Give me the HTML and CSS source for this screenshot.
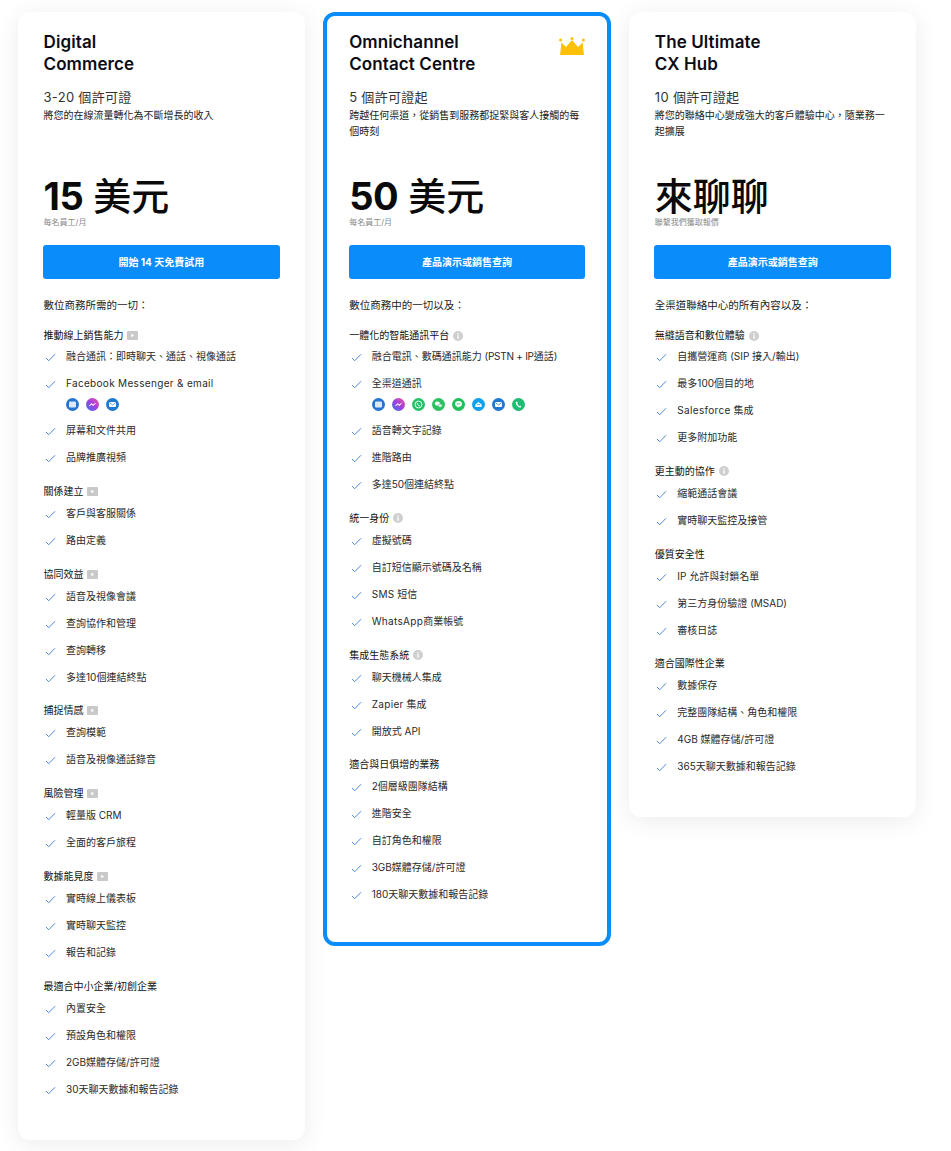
FILE: index.html
```html
<!DOCTYPE html>
<html lang="zh-Hant">
<head>
<meta charset="utf-8">
<title>Plans</title>
<link rel="stylesheet" href="styles.css">
</head>
<body>
<svg class="defs" width="0" height="0" aria-hidden="true">
  <defs>
    <symbol id="chk" viewBox="0 0 12 10"><path d="M1 5.600 4 8.600 11 1.400" fill="none" stroke="#4a86d6" stroke-width="1.1"/></symbol>
    <symbol id="play" viewBox="0 0 11 9"><rect width="11" height="9" rx="1" fill="#c9c9c9"/><path d="M4.200 2.800v3.400l3-1.700z" fill="#fff"/></symbol>
    <symbol id="info" viewBox="0 0 10 10"><circle cx="5" cy="5" r="5" fill="#cfcfcf"/><rect x="4.400" y="4.200" width="1.300" height="3.600" fill="#fff"/><rect x="4.400" y="2.200" width="1.300" height="1.300" fill="#fff"/></symbol>
    <linearGradient id="msg" x1="0" y1="1" x2="1" y2="0"><stop offset="0" stop-color="#2f7bf0"/><stop offset=".5" stop-color="#a23fe0"/><stop offset="1" stop-color="#f0569a"/></linearGradient>
    <symbol id="i-chat" viewBox="0 0 13 13"><circle cx="6.500" cy="6.500" r="6.500" fill="#2574d2"/><rect x="3" y="3.600" width="7" height="5.800" rx="1.200" fill="#dbe9fa"/></symbol>
    <symbol id="i-msg" viewBox="0 0 13 13"><circle cx="6.500" cy="6.500" r="6.500" fill="url(#msg)"/><path d="M3.400 7.800 5.600 5.400l1.500 1.300 2.500-1.500-2.200 2.500-1.500-1.300z" fill="#fff" stroke="#fff" stroke-width=".5"/></symbol>
    <symbol id="i-wa" viewBox="0 0 13 13"><circle cx="6.500" cy="6.500" r="6.500" fill="#27c068"/><circle cx="6.500" cy="6.500" r="3.400" fill="none" stroke="#fff" stroke-width=".9"/><path d="M5.300 5.100c0 1.500 1 2.600 2.500 2.800" fill="none" stroke="#fff" stroke-width=".9"/></symbol>
    <symbol id="i-we" viewBox="0 0 13 13"><circle cx="6.500" cy="6.500" r="6.500" fill="#2cc162"/><ellipse cx="5.400" cy="5.600" rx="2.600" ry="2.100" fill="#fff"/><ellipse cx="8.200" cy="7.600" rx="2.100" ry="1.700" fill="#dff5e6" stroke="#2cc162" stroke-width=".4"/></symbol>
    <symbol id="i-line" viewBox="0 0 13 13"><circle cx="6.500" cy="6.500" r="6.500" fill="#1fc05b"/><ellipse cx="6.500" cy="5.900" rx="3.400" ry="2.800" fill="#fff"/><path d="M5.600 8.200h1.800L5.800 10z" fill="#fff"/><rect x="4.800" y="5.500" width="3.400" height=".8" fill="#1fc05b"/></symbol>
    <symbol id="i-sms" viewBox="0 0 13 13"><circle cx="6.500" cy="6.500" r="6.500" fill="#0ea2ee"/><path d="M3.400 6.400 6.500 4l3.100 2.400v2.600H3.400z" fill="#fff"/><rect x="5" y="6.200" width="3" height=".7" fill="#0ea2ee"/></symbol>
    <symbol id="i-mail" viewBox="0 0 13 13"><circle cx="6.500" cy="6.500" r="6.500" fill="#1f78d1"/><rect x="3" y="3.900" width="7" height="5.200" rx="1" fill="#fff"/><path d="M3.400 4.600 6.500 7l3.100-2.400" fill="none" stroke="#1f78d1" stroke-width=".7"/></symbol>
    <symbol id="i-tel" viewBox="0 0 13 13"><circle cx="6.500" cy="6.500" r="6.500" fill="#1dbd72"/><path d="M4.400 3.400c-.9.600-.8 1.700-.1 3 .8 1.500 2.100 2.900 3.500 3.200.7.100 1.200-.3 1.500-.9L8.200 7.600l-.9.500C6.500 7.700 5.600 6.500 5.300 5.400l.8-.6z" fill="#fff"/></symbol>
  </defs>
</svg>
<main class="plans">

<section class="card">
  <h2 class="name">Digital<br>Commerce</h2>
  <p class="seats">3-20 個許可證</p>
  <p class="desc">將您的在線流量轉化為不斷增長的收入</p>
  <p class="price"><b>15</b> 美元</p>
  <p class="unit">每名員工/月</p>
  <a class="cta">開始 14 天免費試用</a>
  <p class="lead">數位商務所需的一切：</p>

  <h3 class="head">推動線上銷售能力 <svg class="play"><use href="#play"/></svg></h3>
  <ul class="list">
    <li><svg class="chk"><use href="#chk"/></svg>融合通訊：即時聊天、通話、視像通話</li>
    <li class="with-icons"><svg class="chk"><use href="#chk"/></svg><div><span class="lat">Facebook Messenger &amp; email</span>
      <div class="channels"><svg><use href="#i-chat"/></svg><svg><use href="#i-msg"/></svg><svg><use href="#i-mail"/></svg></div></div></li>
    <li><svg class="chk"><use href="#chk"/></svg>屏幕和文件共用</li>
    <li><svg class="chk"><use href="#chk"/></svg>品牌推廣視頻</li>
  </ul>
  <h3 class="head">關係建立 <svg class="play"><use href="#play"/></svg></h3>
  <ul class="list">
    <li><svg class="chk"><use href="#chk"/></svg>客戶與客服關係</li>
    <li><svg class="chk"><use href="#chk"/></svg>路由定義</li>
  </ul>
  <h3 class="head">協同效益 <svg class="play"><use href="#play"/></svg></h3>
  <ul class="list">
    <li><svg class="chk"><use href="#chk"/></svg>語音及視像會議</li>
    <li><svg class="chk"><use href="#chk"/></svg>查詢協作和管理</li>
    <li><svg class="chk"><use href="#chk"/></svg>查詢轉移</li>
    <li><svg class="chk"><use href="#chk"/></svg>多達10個連結終點</li>
  </ul>
  <h3 class="head">捕捉情感 <svg class="play"><use href="#play"/></svg></h3>
  <ul class="list">
    <li><svg class="chk"><use href="#chk"/></svg>查詢模範</li>
    <li><svg class="chk"><use href="#chk"/></svg>語音及視像通話錄音</li>
  </ul>
  <h3 class="head">風險管理 <svg class="play"><use href="#play"/></svg></h3>
  <ul class="list">
    <li><svg class="chk"><use href="#chk"/></svg>輕量版 CRM</li>
    <li><svg class="chk"><use href="#chk"/></svg>全面的客戶旅程</li>
  </ul>
  <h3 class="head">數據能見度 <svg class="play"><use href="#play"/></svg></h3>
  <ul class="list">
    <li><svg class="chk"><use href="#chk"/></svg>實時線上儀表板</li>
    <li><svg class="chk"><use href="#chk"/></svg>實時聊天監控</li>
    <li><svg class="chk"><use href="#chk"/></svg>報告和記錄</li>
  </ul>
  <h3 class="head">最適合中小企業/初創企業</h3>
  <ul class="list">
    <li><svg class="chk"><use href="#chk"/></svg>內置安全</li>
    <li><svg class="chk"><use href="#chk"/></svg>預設角色和權限</li>
    <li><svg class="chk"><use href="#chk"/></svg>2GB媒體存儲/許可證</li>
    <li><svg class="chk"><use href="#chk"/></svg>30天聊天數據和報告記錄</li>
  </ul>
</section>

<section class="card featured">
  <svg class="crown" viewBox="0 0 26 18" aria-hidden="true">
    <path d="M2.500 5.500 7 10l5.900-7L19 10l4.500-4.500L25 18H1z" fill="#ffc107"/>
    <circle cx="1.600" cy="3" r="1.500" fill="#ffc107"/><circle cx="13" cy="1.500" r="1.500" fill="#ffc107"/><circle cx="24.400" cy="3" r="1.500" fill="#ffc107"/>
  </svg>
  <h2 class="name">Omnichannel<br>Contact Centre</h2>
  <p class="seats">5 個許可證起</p>
  <p class="desc">跨越任何渠道，從銷售到服務都捉緊與客人接觸的每個時刻</p>
  <p class="price"><b>50</b> 美元</p>
  <p class="unit">每名員工/月</p>
  <a class="cta">產品演示或銷售查詢</a>
  <p class="lead">數位商務中的一切以及：</p>

  <h3 class="head">一體化的智能通訊平台 <svg class="info"><use href="#info"/></svg></h3>
  <ul class="list">
    <li><svg class="chk"><use href="#chk"/></svg><span>融合電訊、數碼通訊能力 <span class="tight">(PSTN + IP</span>通話)</span></li>
    <li class="with-icons"><svg class="chk"><use href="#chk"/></svg><div>全渠道通訊
      <div class="channels"><svg><use href="#i-chat"/></svg><svg><use href="#i-msg"/></svg><svg><use href="#i-wa"/></svg><svg><use href="#i-we"/></svg><svg><use href="#i-line"/></svg><svg><use href="#i-sms"/></svg><svg><use href="#i-mail"/></svg><svg><use href="#i-tel"/></svg></div></div></li>
    <li><svg class="chk"><use href="#chk"/></svg>語音轉文字記錄</li>
    <li><svg class="chk"><use href="#chk"/></svg>進階路由</li>
    <li><svg class="chk"><use href="#chk"/></svg>多達50個連結終點</li>
  </ul>
  <h3 class="head">統一身份 <svg class="info"><use href="#info"/></svg></h3>
  <ul class="list">
    <li><svg class="chk"><use href="#chk"/></svg>虛擬號碼</li>
    <li><svg class="chk"><use href="#chk"/></svg>自訂短信顯示號碼及名稱</li>
    <li><svg class="chk"><use href="#chk"/></svg><span><span class="lat">SMS</span> 短信</span></li>
    <li><svg class="chk"><use href="#chk"/></svg><span><span class="lat">WhatsApp</span>商業帳號</span></li>
  </ul>
  <h3 class="head">集成生態系統 <svg class="info"><use href="#info"/></svg></h3>
  <ul class="list">
    <li><svg class="chk"><use href="#chk"/></svg>聊天機械人集成</li>
    <li><svg class="chk"><use href="#chk"/></svg><span><span class="lat">Zapier</span> 集成</span></li>
    <li><svg class="chk"><use href="#chk"/></svg>開放式 API</li>
  </ul>
  <h3 class="head">適合與日俱增的業務</h3>
  <ul class="list">
    <li><svg class="chk"><use href="#chk"/></svg>2個層級團隊結構</li>
    <li><svg class="chk"><use href="#chk"/></svg>進階安全</li>
    <li><svg class="chk"><use href="#chk"/></svg>自訂角色和權限</li>
    <li><svg class="chk"><use href="#chk"/></svg>3GB媒體存儲/許可證</li>
    <li><svg class="chk"><use href="#chk"/></svg>180天聊天數據和報告記錄</li>
  </ul>
</section>

<section class="card">
  <h2 class="name">The Ultimate<br>CX Hub</h2>
  <p class="seats">10 個許可證起</p>
  <p class="desc">將您的聯絡中心變成強大的客戶體驗中心，隨業務一起擴展</p>
  <p class="price">來聊聊</p>
  <p class="unit">聯繫我們獲取報價</p>
  <a class="cta">產品演示或銷售查詢</a>
  <p class="lead">全渠道聯絡中心的所有內容以及：</p>

  <h3 class="head">無縫語音和數位體驗 <svg class="info"><use href="#info"/></svg></h3>
  <ul class="list">
    <li><svg class="chk"><use href="#chk"/></svg>自攜營運商 (SIP 接入/輸出)</li>
    <li><svg class="chk"><use href="#chk"/></svg>最多100個目的地</li>
    <li><svg class="chk"><use href="#chk"/></svg><span><span class="lat">Salesforce</span> 集成</span></li>
    <li><svg class="chk"><use href="#chk"/></svg>更多附加功能</li>
  </ul>
  <h3 class="head">更主動的協作 <svg class="info"><use href="#info"/></svg></h3>
  <ul class="list">
    <li><svg class="chk"><use href="#chk"/></svg>縮範通話會議</li>
    <li><svg class="chk"><use href="#chk"/></svg>實時聊天監控及接管</li>
  </ul>
  <h3 class="head">優質安全性</h3>
  <ul class="list">
    <li><svg class="chk"><use href="#chk"/></svg>IP 允許與封鎖名單</li>
    <li><svg class="chk"><use href="#chk"/></svg>第三方身份驗證 (MSAD)</li>
    <li><svg class="chk"><use href="#chk"/></svg>審核日誌</li>
  </ul>
  <h3 class="head">適合國際性企業</h3>
  <ul class="list">
    <li><svg class="chk"><use href="#chk"/></svg>數據保存</li>
    <li><svg class="chk"><use href="#chk"/></svg>完整團隊結構、角色和權限</li>
    <li><svg class="chk"><use href="#chk"/></svg>4GB 媒體存儲/許可證</li>
    <li><svg class="chk"><use href="#chk"/></svg>365天聊天數據和報告記錄</li>
  </ul>
</section>

</main>
</body>
</html>
```

FILE: styles.css
```css
* { box-sizing: border-box; }
html, body { margin: 0; padding: 0; background: #fff; }
body {
  font-family: "Inter", "Noto Sans CJK TC", sans-serif;
  color: #222;
  font-size: 10px;
}
.defs { position: absolute; }
.plans {
  display: flex;
  align-items: flex-start;
  gap: 18px;
  padding: 12px 35px 11px 18px;
}
.card {
  position: relative;
  flex: 1 1 0;
  min-width: 0;
  background: #fff;
  border-radius: 12px;
  padding: 19px 25px 43px;
  box-shadow: 0 4px 24px rgba(0, 0, 0, .08);
}
.featured {
  border: 4px solid #0a8dfa;
  padding: 15px 22px 40px;
  box-shadow: none;
}
.crown {
  position: absolute;
  top: 21px;
  right: 22px;
  width: 26px;
  height: 18px;
}
.name {
  margin: 0 0 0 .5px;
  font-size: 17px;
  line-height: 22px;
  letter-spacing: .1px;
  font-weight: 600;
  color: #0b0b14;
}
.seats {
  margin: 13px 0 0 .5px;
  font-size: 13px;
  line-height: 18px;
  letter-spacing: .3px;
  color: #333;
}
.desc {
  margin: 1px 0 0 .5px;
  height: 69px;
  font-size: 10px;
  line-height: 16px;
  color: #222;
}
.price {
  margin: 0 0 0 .5px;
  font-size: 38px;
  line-height: 40px;
  font-weight: 500;
  color: #0a0a0a;
}
.price b { font-weight: 700; letter-spacing: -.5px; }
.unit {
  margin: 0 0 0 .5px;
  font-size: 8px;
  line-height: 12px;
  color: #8a8a8a;
}
.cta {
  display: block;
  margin-top: 17px;
  height: 34px;
  border-radius: 3px;
  background: #0a8dfa;
  color: #fff;
  text-align: center;
  font-size: 10px;
  line-height: 34px;
  font-weight: 700;
}
.lead {
  margin: 19px 0 0 .5px;
  font-size: 10.5px;
  line-height: 16px;
  color: #222;
}
.head {
  margin: 14px 0 0 .5px;
  display: flex;
  align-items: center;
  gap: 3px;
  font-size: 10px;
  line-height: 15px;
  font-weight: 400;
  color: #111;
}
.list {
  list-style: none;
  margin: 7px 0 0;
  padding: 0;
}
.lead + .head + .list { margin-top: 6px; }
.list + .head { margin-top: 18.8px; }
.list li {
  display: flex;
  align-items: flex-start;
  min-height: 15px;
  margin-bottom: 12px;
  padding-left: 2px;
  line-height: 15px;
  color: #2a2a2a;
}
.list li:last-child { margin-bottom: 0; }
.lat { letter-spacing: .32px; }
.tight { letter-spacing: -.25px; }
.chk {
  flex: none;
  width: 11px;
  height: 9px;
  margin: 4px 10px 0 0;
}
.play { width: 11px; height: 9px; }
.info { width: 10px; height: 10px; margin-left: 1px; }
.channels {
  display: flex;
  gap: 7px;
  margin-top: 7px;
}
.channels svg { width: 13px; height: 13px; }
```
